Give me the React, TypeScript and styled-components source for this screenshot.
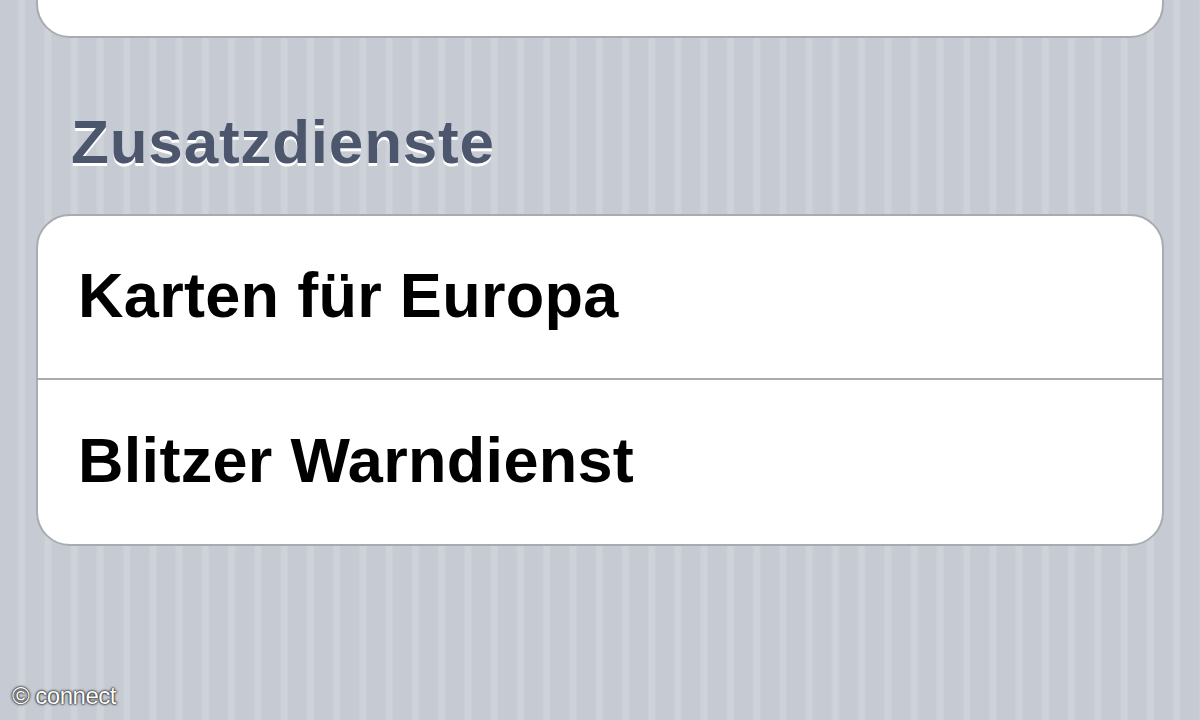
import React from 'react';
import styled, { createGlobalStyle } from 'styled-components';

const GlobalStyle = createGlobalStyle`
  html, body {
    margin: 0;
    padding: 0;
  }
  body {
    font-family: "Liberation Sans", Arial, Helvetica, sans-serif;
  }
`;

const Screen = styled.div`
  position: relative;
  width: 1200px;
  height: 720px;
  overflow: hidden;
  box-sizing: border-box;
  padding: 0 36px;
  background-color: #c8cdd5;
  background-image: repeating-linear-gradient(
    90deg,
    #c6cbd3 0px,
    #c6cbd3 17px,
    #ced3da 19.5px,
    #ced3da 24px,
    #c6cbd3 26.25px
  );
`;

const Group = styled.div<{ $clipped?: boolean }>`
  background: #ffffff;
  border: 2px solid #a8abb0;
  border-radius: 34px;
  overflow: hidden;
  margin-top: ${(p) => (p.$clipped ? '-70px' : '0')};
  height: ${(p) => (p.$clipped ? '108px' : 'auto')};
  box-sizing: border-box;
`;

const SectionHeader = styled.h2`
  margin: 0;
  padding: 73px 0 0 35px;
  height: 176px;
  box-sizing: border-box;
  font-size: 62px;
  line-height: 1;
  font-weight: bold;
  color: #4c566c;
  text-shadow: 0 3px 0 #ffffff;
  letter-spacing: 0.8px;
`;

const Row = styled.div<{ $last?: boolean }>`
  display: flex;
  align-items: center;
  height: 164px;
  box-sizing: border-box;
  padding: 0 0 4px 40px;
  border-bottom: ${(p) => (p.$last ? 'none' : '2px solid #a8abb0')};
  font-size: 63px;
  font-weight: bold;
  color: #000000;
  letter-spacing: 0.3px;
`;

const Watermark = styled.div`
  position: absolute;
  left: 12px;
  bottom: 10px;
  font-size: 24px;
  color: #ffffff;
  text-shadow: 0 0 3px #222, 0 0 2px #222, 0 0 1px #222;
  letter-spacing: -0.5px;
`;

const rows = ['Karten für Europa', 'Blitzer Warndienst'];

export default function App() {
  return (
    <>
      <GlobalStyle />
      <Screen>
        <Group $clipped />
        <SectionHeader>Zusatzdienste</SectionHeader>
        <Group>
          {rows.map((r, i) => (
            <Row key={r} $last={i === rows.length - 1}>
              {r}
            </Row>
          ))}
        </Group>
        <Watermark>© connect</Watermark>
      </Screen>
    </>
  );
}
